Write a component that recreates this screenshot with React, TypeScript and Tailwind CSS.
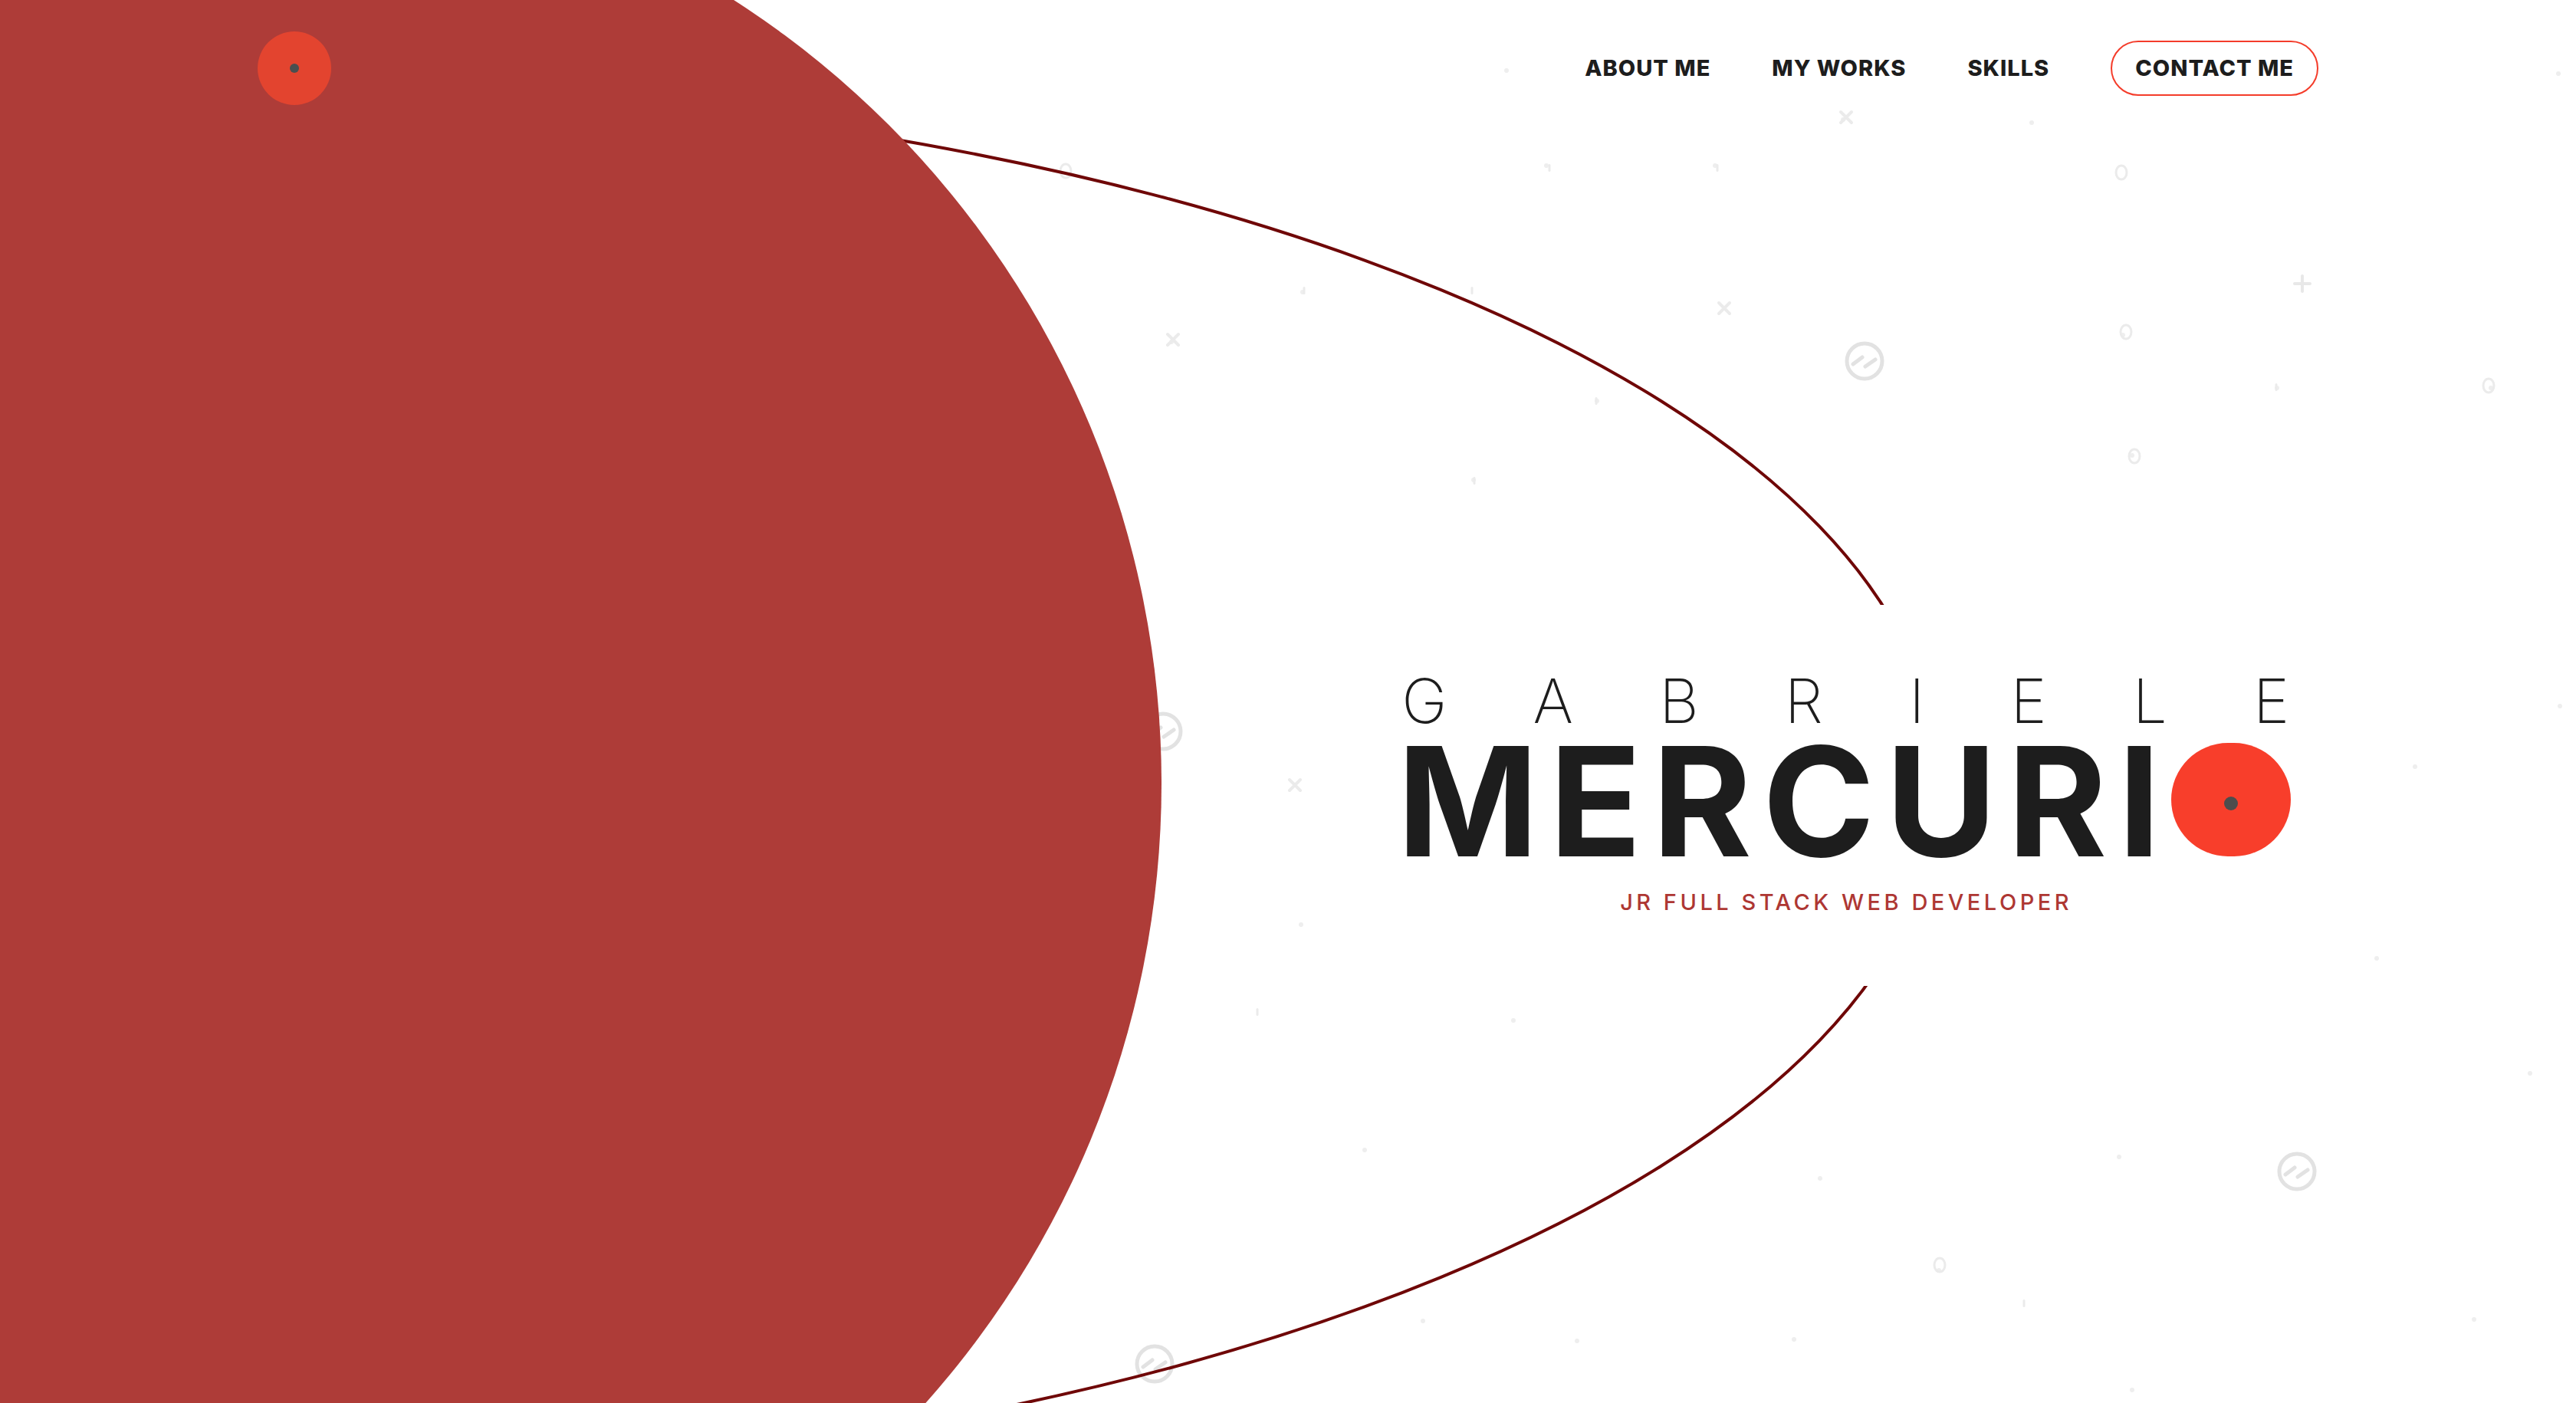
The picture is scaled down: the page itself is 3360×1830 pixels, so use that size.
const dots: [number, number][] = [
  [1965, 92], [2017, 216], [2237, 216], [2404, 156], [1699, 381], [1528, 446],
  [1922, 626], [2781, 594], [2970, 506], [3249, 506], [3337, 96], [3339, 921],
  [1697, 1206], [1974, 1331], [2529, 1657], [2340, 1747], [2781, 1813], [3227, 1721],
  [2374, 1537], [2764, 1509], [2057, 1749], [1856, 1723], [2769, 437], [2083, 523],
  [3100, 1250], [3300, 1400], [1780, 1500], [2650, 160], [3150, 1000], [1900, 1050],
];

const ticks: [number, number][] = [
  [2021, 219], [2240, 219], [1701, 379], [1920, 379], [2969, 505], [2082, 523],
  [1923, 627], [2640, 1700], [1640, 1320],
];

const rings: [number, number][] = [
  [2767, 225], [2773, 433], [3246, 503], [2784, 595], [1390, 223], [2530, 1650],
];

const crosses: [number, number][] = [
  [2249, 402], [2408, 153], [1530, 443], [1689, 1024],
];

const swirls: [number, number][] = [
  [2432, 471], [2996, 1528], [1506, 1779], [1517, 954],
];

function Swirl({ x, y }: { x: number; y: number }) {
  return (
    <g transform={`translate(${x} ${y})`} stroke="#e2e2e2" strokeWidth="5" fill="none" strokeLinecap="round">
      <circle r="23" />
      <path d="M-15 4 L-3 -5 M1 7 L14 -2" />
    </g>
  );
}

function Backdrop() {
  return (
    <svg
      className="absolute inset-0 h-full w-full"
      viewBox="0 0 3360 1830"
      preserveAspectRatio="none"
    >
      {dots.map(([x, y], i) => (
        <circle key={"d" + i} cx={x} cy={y} r="3" fill="#eeeeee" />
      ))}
      {ticks.map(([x, y], i) => (
        <rect key={"t" + i} x={x - 1.5} y={y - 5} width="3" height="10" rx="1.5" fill="#ebebeb" />
      ))}
      {rings.map(([x, y], i) => (
        <ellipse key={"r" + i} cx={x} cy={y} rx="7" ry="9" fill="none" stroke="#ebebeb" strokeWidth="3" />
      ))}
      {crosses.map(([x, y], i) => (
        <path key={"c" + i} d={`M${x - 7} ${y - 7} L${x + 7} ${y + 7} M${x + 7} ${y - 7} L${x - 7} ${y + 7}`} stroke="#ebebeb" strokeWidth="4" strokeLinecap="round" />
      ))}
      <path d="M3003 360 L3003 380 M2993 370 L3013 370" stroke="#e8e8e8" strokeWidth="4" strokeLinecap="round" />
      {swirls.map(([x, y], i) => (
        <Swirl key={"s" + i} x={x} y={y} />
      ))}
      <ellipse cx="310" cy="1022" rx="2219" ry="911" fill="none" stroke="#6f0707" strokeWidth="4" />
      <circle cx="300" cy="1022" r="1215" fill="#ae3c38" />
    </svg>
  );
}

export default function App() {
  return (
    <div className="relative h-screen w-full overflow-hidden bg-white font-['Inter','Liberation_Sans',sans-serif] text-[#1d1d1d]">
      <Backdrop />

      <header className="relative z-10 mx-auto flex h-[178px] w-4/5 items-center justify-between">
        <div className="flex h-[96px] w-[96px] items-center justify-center rounded-full bg-[#e3442f]">
          <div className="h-[12px] w-[12px] rounded-full bg-[#4a4f50]"></div>
        </div>

        <nav className="flex items-center gap-[80px] text-[29px] font-extrabold tracking-[1px]">
          <a href="#about">ABOUT ME</a>
          <a href="#works">MY WORKS</a>
          <a href="#skills">SKILLS</a>
          <a
            href="#contact"
            className="flex h-[72px] items-center rounded-full border-2 border-[#f43c2a] px-[30px]"
          >
            CONTACT ME
          </a>
        </nav>
      </header>

      <main className="relative z-10 flex justify-end pr-[276px] pt-[611px]">
        <div className="bg-white px-[96px] pb-[95px] pt-[85px]">
          <div className="flex w-[1158px] justify-between text-[80px] font-extralight leading-none">
            {"GABRIELE".split("").map((letter, i) => (
              <span key={i}>{letter}</span>
            ))}
          </div>

          <h1 className="-ml-[6px] mt-[12px] whitespace-nowrap text-[198px] font-bold leading-[0.8] tracking-[14px]">
            MERCURI<span className="inline-block h-[148px] w-[156px] rounded-full bg-[#f83e2b] align-baseline"><span className="ml-[69px] mt-[70px] block h-[18px] w-[18px] rounded-full bg-[#4d4d4d]"></span></span>
          </h1>

          <p className="mt-[38px] text-center text-[29px] font-medium leading-none tracking-[4.5px] text-[#ae3733]">
            JR FULL STACK WEB DEVELOPER
          </p>
        </div>
      </main>
    </div>
  );
}
